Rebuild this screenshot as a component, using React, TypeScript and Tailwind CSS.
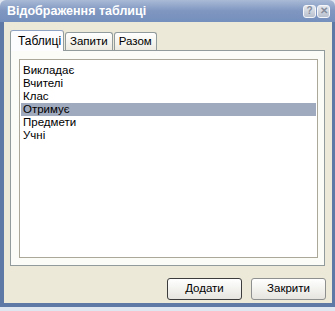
import React, { useState } from 'react';

const tables = ['Викладає', 'Вчителі', 'Клас', 'Отримує', 'Предмети', 'Учні'];
const tabs = ['Таблиці', 'Запити', 'Разом'];

function TitleButton({ children }: { children: React.ReactNode }) {
  return (
    <div className="w-[13px] h-[13px] rounded-[3px] border border-[#f4f6fa] bg-gradient-to-b from-[#e4e7ed] to-[#b9c1cf] flex items-center justify-center text-[10px] font-bold leading-none text-[#848c9c]">
      {children}
    </div>
  );
}

export default function App() {
  const [activeTab, setActiveTab] = useState(0);
  const [selected, setSelected] = useState(3);

  return (
    <div className="w-[335px] h-[311px] bg-[#dfe6ef] font-['Liberation_Sans',Arial,sans-serif] text-[11px] text-black">
      <div className="h-[307px] flex flex-col">
        {/* title bar */}
        <div className="h-[22px] flex items-center pl-[7px] pr-[5px] rounded-t-[6px] bg-gradient-to-b from-[#a9bad6] via-[#7f96c0] to-[#7590bd]">
          <span className="flex-1 text-white font-bold text-[12.5px] leading-none pt-[1px]">
            Відображення таблиці
          </span>
          <div className="flex gap-[1px]">
            <TitleButton>?</TitleButton>
            <TitleButton>✕</TitleButton>
          </div>
        </div>

        {/* body */}
        <div className="flex-1 flex flex-col bg-[#ece9d8] border-l-4 border-r-3 border-b-4 border-[#5f79a6]">
          <div className="pl-[6px] pr-[7px] pt-[7px] flex flex-col">
            <div className="flex items-end h-[21px]">
              {tabs.map((t, i) =>
                i === activeTab ? (
                  <button
                    key={t}
                    onClick={() => setActiveTab(i)}
                    className="relative z-10 h-[21px] -mb-[1px] px-[7px] w-[54px] rounded-t-[3px] border border-b-0 border-[#919b9c] border-t-[#8fa3c4] bg-[#fcfcfe] text-[12px] leading-none text-left"
                  >
                    {t}
                  </button>
                ) : (
                  <button
                    key={t}
                    onClick={() => setActiveTab(i)}
                    className="h-[18px] ml-[1px] px-[4px] rounded-t-[3px] border border-b-0 border-[#919b9c] bg-gradient-to-b from-[#ffffff] to-[#eceae0] text-[11.5px] leading-none"
                  >
                    {t}
                  </button>
                )
              )}
            </div>
            <div className="h-[216px] border border-[#919b9c] bg-[#fbfbf8] pt-[8px] pl-[8px] pr-[6px] pb-[7px]">
              <div className="h-full border border-[#aca899] bg-white pt-[4px] pl-[1px] pr-[1px] text-[11.5px]">
                {tables.map((t, i) => (
                  <div
                    key={t}
                    onClick={() => setSelected(i)}
                    className={`h-[13px] leading-[13px] pl-[2px] ${
                      i === selected ? 'bg-[#a0aabe]' : ''
                    }`}
                  >
                    {t}
                  </div>
                ))}
              </div>
            </div>
          </div>

          <div className="flex justify-end gap-[9px] pr-[6px] mt-[12px]">
            <button className="w-[75px] h-[22px] rounded-[3px] border border-[#3c3c3c] bg-gradient-to-b from-[#ffffff] to-[#e6e5df] text-[11.5px]">
              Додати
            </button>
            <button className="w-[75px] h-[22px] rounded-[3px] border border-[#8e8f8f] bg-gradient-to-b from-[#ffffff] to-[#e6e5df] text-[11.5px]">
              Закрити
            </button>
          </div>
        </div>
      </div>
    </div>
  );
}
